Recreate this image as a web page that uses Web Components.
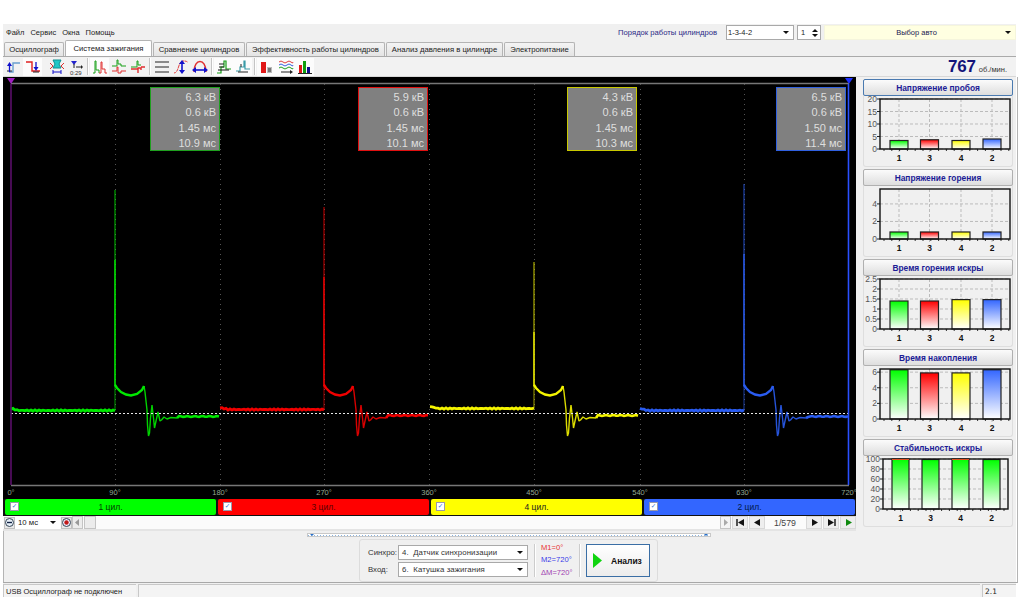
<!DOCTYPE html>
<html lang="ru">
<head>
<meta charset="utf-8">
<title>Система зажигания</title>
<style>
  html, body { margin: 0; padding: 0; background: #fff; }
  body { font-family: "Liberation Sans", sans-serif; font-size: 7.5px; color: #222; }
</style>
</head>
<body>
<app-window>
  <top-bar></top-bar>
  <cyl-tabs></cyl-tabs>
  <tool-bar></tool-bar>
  <main-area>
    <left-column>
      <scope-view></scope-view>
      <cyl-strip></cyl-strip>
      <nav-row></nav-row>
      <split-bar></split-bar>
      <analysis-panel></analysis-panel>
    </left-column>
    <side-panel>
      <bar-chart focus heading="Напряжение пробоя" max="20" ticks="0,5,10,15,20" values="3.4,3.7,3.4,4"></bar-chart>
      <bar-chart heading="Напряжение горения" max="5.7" ticks="0,2,4" values="0.8,0.8,0.8,0.8"></bar-chart>
      <bar-chart heading="Время горения искры" max="2.5" ticks="0,0.5,1,1.5,2,2.5" values="1.4,1.4,1.47,1.47"></bar-chart>
      <bar-chart heading="Время накопления" max="6.4" ticks="0,2,4,6" values="6.3,5.9,5.9,6.3"></bar-chart>
      <bar-chart mono heading="Стабильность искры" max="100" ticks="0,20,40,60,80,100" values="100,99,100,99"></bar-chart>
    </side-panel>
  </main-area>
  <status-bar></status-bar>
</app-window>

<script>
const CYL = [
  { name: '1 цил.', color: '#00ff00', text: '#043a04' },
  { name: '3 цил.', color: '#ff0000', text: '#5a0000' },
  { name: '4 цил.', color: '#ffff00', text: '#222' },
  { name: '2 цил.', color: '#3366ff', text: '#011a4a' }
]

class AppWindow extends HTMLElement {
  connectedCallback () {
    this.attachShadow({ mode: 'open' }).innerHTML = `
      <style>
        :host {
          display: flex;
          flex-direction: column;
          box-sizing: border-box;
          width: 1013px;
          height: 573px;
          margin: 24px 0 3px 3px;
          background: #f0f0f0;
        }
      </style>
      <slot></slot>`
  }
}

class WinSelect extends HTMLElement {
  connectedCallback () {
    this.attachShadow({ mode: 'open' }).innerHTML = `
      <style>
        :host {
          display: flex;
          align-items: center;
          box-sizing: border-box;
          height: 15px;
          padding: 0 4px 0 3px;
          background: #fff;
          border: 1px solid #a9a9a9;
          white-space: nowrap;
        }
        span { flex: 1; }
        i { width: 0; height: 0; border: 3px solid transparent; border-top: 3px solid #111; border-bottom: 0; }
      </style>
      <span><slot></slot></span><i></i>`
  }
}

class TopBar extends HTMLElement {
  connectedCallback () {
    this.attachShadow({ mode: 'open' }).innerHTML = `
      <style>
        :host { display: flex; align-items: center; height: 16px; flex: none; padding-top: 1px; box-sizing: border-box; }
        .menu { display: flex; gap: 6px; padding-left: 3px; flex: 1; }
        .order { color: #2a2a86; margin-right: 9px; font-size: 7.65px; }
        .spin {
          display: flex; align-items: center; justify-content: space-between; box-sizing: border-box;
          width: 24px; height: 15px; margin: 0 3px; padding: 0 2px 0 3px; background: #fff; border: 1px solid #a9a9a9;
        }
        .spin b { display: flex; flex-direction: column; gap: 2px; }
        .spin i { width: 0; height: 0; border: 3px solid transparent; }
        .spin i:first-child { border-bottom: 3px solid #111; border-top: 0; }
        .spin i:last-child { border-top: 3px solid #111; border-bottom: 0; }
      </style>
      <div class="menu"><span>Файл</span><span>Сервис</span><span>Окна</span><span>Помощь</span></div>
      <span class="order">Порядок работы цилиндров</span>
      <win-select style="width:68px;padding-left:1px">1-3-4-2</win-select>
      <div class="spin"><span>1</span><b><i></i><i></i></b></div>
      <win-select style="width:192px;background:#ffffe1;border-color:#f5f5dc;text-align:center;color:#1a1a50">Выбор авто</win-select>`
  }
}

class CylTabs extends HTMLElement {
  connectedCallback () {
    const tabs = [['Осциллограф', 60], ['Система зажигания', 87], ['Сравнение цилиндров', 92], ['Эффективность работы цилиндров', 139], ['Анализ давления в цилиндре', 117], ['Электропитание', 71]]
    this.attachShadow({ mode: 'open' }).innerHTML = `
      <style>
        :host { display: flex; align-items: flex-end; height: 16px; flex: none; padding-left: 1px; gap: 1px; box-sizing: border-box; font-size: 7.7px; }
        div {
          display: flex; align-items: center; justify-content: center; box-sizing: border-box;
          height: 14px; background: linear-gradient(#f4f4f4, #e4e4e4);
          border: 1px solid #b4b4b4; border-bottom: 0; border-radius: 2px 2px 0 0; white-space: nowrap;
        }
        .on { height: 16px; background: #fff; }
      </style>
      ${tabs.map(([t, w], i) => `<div class="${i === 1 ? 'on' : ''}" style="width:${w}px">${t}</div>`).join('')}`
  }
}

const ICONS = [
  '<path d="M3 13H7V4H14" stroke="#6aa0d0" fill="none" stroke-width="1.4"/><path d="M1 12H6" stroke="#222"/><path d="M3.5 13V6" stroke="#11c" stroke-width="1.3"/><path d="M1 7L3.5 3L6 7Z" fill="#11c"/>',
  '<path d="M1 3H7V12H15" stroke="#e02020" fill="none" stroke-width="1.4"/><path d="M8 13H14" stroke="#222"/><path d="M11 3V9" stroke="#11c" stroke-width="1.3"/><path d="M8.5 8H13.5L11 12Z" fill="#11c"/>',
  '<path d="M1 4L4 7L1 10M15 4L12 7L15 10" stroke="#e03030" fill="none"/><path d="M4 1H12L10 5L12 9H4L6 5Z" fill="#22c8c8" stroke="#109090"/><path d="M4 13H12M4 11V15M12 11V15" stroke="#11c"/>',
  '<path d="M3 2H9L6 6Z" fill="#22c"/><path d="M6 5V9M8 8H13" stroke="#222"/><path d="M13 6L15 8L13 10Z" fill="#222"/><text x="2" y="15.5" font-size="6" font-family="Liberation Sans" fill="#333">0:29</text>',
  '<path d="M1 14H3V2H4V11H7V14" stroke="#18a018" fill="none"/><path d="M7 14H9V3H10V10H13V14H15" stroke="#e03030" fill="none"/>',
  '<path d="M1 7H6V1H7V5H10V7H15" stroke="#18a018" fill="none"/><path d="M1 12H6V8H7V14H10V12H15" stroke="#e03030" fill="none"/>',
  '<path d="M1 8H7V2H8V6H11" stroke="#18a018" fill="none"/><path d="M1 10H8M11 8H15M8 14V9H11V11" stroke="#e03030" fill="none" stroke-width="1.4"/>',
  '<path d="M1 3H15M1 8H15M1 13H15" stroke="#222" stroke-width="1.2"/>',
  '<path d="M1 14C6 14 5 2 10 2S13 3 15 3" stroke="#e04040" fill="none" stroke-dasharray="3 .5"/><path d="M9 3V13" stroke="#11c" stroke-width="1.6"/><path d="M6 5L9 1L12 5ZM6 11L9 15L12 11Z" fill="#11c"/>',
  '<path d="M2 13C2 -1 14 -1 14 13" stroke="#e03030" fill="none" stroke-width="1.5"/><path d="M3 11H13" stroke="#11c" stroke-width="1.6"/><path d="M4 8L0 11L4 14ZM12 8L16 11L12 14Z" fill="#11c"/>',
  '<path d="M1 14H5V8H8V2H10V10H15" stroke="#18a018" fill="none" stroke-width="1.2"/><path d="M3 5H8M3 8H8" stroke="#222"/><path d="M2 11H13" stroke="#111"/>',
  '<path d="M1 12H5V8H9V2H10V10H15" stroke="#3a9ca8" fill="none" stroke-width="1.2"/><path d="M6 5V8M3 13H13" stroke="#222"/>',
  '<rect x="2" y="3" width="5" height="11" fill="#e01818"/><path d="M8 8H13V14H8Z" fill="#bbb"/><path d="M9 10H12M9 12H12" stroke="#333"/>',
  '<path d="M1 3Q3 1 5 3T9 3T13 3T15 3" stroke="#e04040" fill="none"/><path d="M1 6Q3 4 5 6T9 6T13 6T15 6" stroke="#3a60e0" fill="none"/><path d="M1 9Q3 7 5 9T9 9T13 9T15 9" stroke="#20a020" fill="none"/><path d="M3 13H12" stroke="#222"/><path d="M12 11L15 13L12 15Z" fill="#222"/>',
  '<rect x="2" y="6" width="3" height="8" fill="#e01818"/><rect x="6" y="2" width="3" height="12" fill="#10a010"/><rect x="10" y="8" width="3" height="6" fill="#10108a"/><path d="M1 14.5H15" stroke="#222"/>'
]

class ToolBar extends HTMLElement {
  connectedCallback () {
    const groups = [[0, 1], [2, 3], [4, 5, 6], [7, 8, 9], [10, 11], [12, 13, 14]]
    const lit = [1, 4, 10, 11, 12, 13, 14]
    this.attachShadow({ mode: 'open' }).innerHTML = `
      <style>
        :host {
          display: flex; align-items: center; height: 21px; flex: none; padding-left: 1px; box-sizing: border-box;
          border-top: 1px solid #aaa; border-bottom: 1px solid #d8d8d8; background: #f2f2f2;
        }
        .g { display: flex; }
        .b { display: flex; align-items: center; justify-content: center; width: 19px; height: 18px; }
        .on { background: #fcfcfc; }
        .sep { width: 2px; height: 17px; margin: 0 1px 0 2px; background: linear-gradient(90deg, #c4c4c4 50%, #fff 50%); }
        .gap { width: 5px; }
        .rpm { margin-left: auto; padding-right: 9px; display: flex; align-items: baseline; gap: 3px; color: #333; }
        b { font-size: 17px; color: #14147a; letter-spacing: -.2px; }
      </style>
      ${groups.map((g, i) => `
        ${i ? (i > 1 ? '<div class="sep"></div>' : '<div class="gap"></div>') : ''}
        <div class="g">${g.map(k => `<div class="b ${lit.includes(k) ? 'on' : ''}"><svg width="16" height="16" viewBox="0 0 16 16">${ICONS[k]}</svg></div>`).join('')}</div>`).join('')}
      <div class="rpm"><b>767</b><span>об./мин.</span></div>`
  }
}

class MainArea extends HTMLElement {
  connectedCallback () {
    this.attachShadow({ mode: 'open' }).innerHTML = `
      <style>:host { display: flex; flex: 1; min-height: 0; gap: 7px; border-bottom: 1px solid #a8a8a8; border-right: 1px solid #b4b4b4; margin-right: -2px; }</style>
      <slot></slot>`
  }
}

class LeftColumn extends HTMLElement {
  connectedCallback () {
    this.attachShadow({ mode: 'open' }).innerHTML = `
      <style>:host { display: flex; flex-direction: column; width: 853px; flex: none; box-shadow: inset 1px 0 #b4b4b4; }</style>
      <slot></slot>`
  }
}

class SidePanel extends HTMLElement {
  connectedCallback () {
    this.attachShadow({ mode: 'open' }).innerHTML = `
      <style>:host { display: flex; flex-direction: column; gap: 2px; width: 150px; flex: none; padding-top: 2px; }</style>
      <slot></slot>`
  }
}

class ValueBox extends HTMLElement {
  connectedCallback () {
    this.attachShadow({ mode: 'open' }).innerHTML = `
      <style>
        :host {
          position: absolute; top: 10px; box-sizing: border-box; width: 70px; height: 64px; padding: 2px 3px 0 0;
          background: #808080; border: 1px solid; color: #dedede;
          font-size: 11px; line-height: 15.4px; text-align: right;
        }
      </style>
      <slot></slot>`
  }
}

// x, y of one ignition cycle relative to the start of its 210 px segment
const CURVE = [[104, 385], [106, 388], [110, 392], [115, 394.5], [120, 395.5], [126, 394], [131, 390], [133, 386]]
const RING = [[133, 386], [134, 392], [136, 410], [136.5, 425], [137.5, 436], [138.5, 433], [139.5, 418], [141, 405], [142.5, 418], [143.5, 428], [145, 421], [147, 412], [149, 421], [150.5, 420], [153, 417], [156, 419], [160, 417.5], [166, 418]]

class ScopeView extends HTMLElement {
  trace (start, base, end, top, color, seed) {
    const pts = list => list.map(([x, y]) => `${start + x},${y}`).join(' ')
    let low = ''
    for (let x = 0; x <= 104; x += 2) {
      low += `${start + x},${(base + Math.sin((x + seed) * 1.7) * 0.6 + (x < 8 ? -2 * (1 - x / 8) : 0)).toFixed(1)} `
    }
    let tail = `${start + 166},418 `
    for (let x = 168; x <= 209; x += 2) {
      tail += `${start + x},${(end + Math.sin((x + seed) * 2.3) * 0.5).toFixed(1)} `
    }
    const sx = start + 104
    return `
      <polyline points="${low}" fill="none" stroke="${color}" stroke-width="2.8"/>
      <path d="M${sx} ${base}V386" stroke="${color}" stroke-width="1.2" opacity=".55"/>
      <path d="M${sx} 386V${top + 70}" stroke="${color}" stroke-width="1.6"/>
      <path d="M${sx} ${top + 70}V${top}" stroke="${color}" stroke-width="1" opacity=".85"/>
      <polyline points="${pts(CURVE)}" fill="none" stroke="${color}" stroke-width="2.4"/>
      <polyline points="${pts(RING)}" fill="none" stroke="${color}" stroke-width="1.4" stroke-linejoin="bevel" opacity=".9"/>
      <polyline points="${tail}" fill="none" stroke="${color}" stroke-width="2.6"/>`
  }

  connectedCallback () {
    const xs = [115, 220, 324, 429, 534, 640, 744]
    const deg = [[11, '0°'], [115, '90°'], [220, '180°'], [324, '270°'], [429, '360°'], [534, '450°'], [640, '540°'], [744, '630°'], [849, '720°']]
    const boxes = [
      [150, '#1fa01f', ['6.3 кВ', '0.6 кВ', '1.45 мс', '10.9 мс']],
      [358, '#e01010', ['5.9 кВ', '0.6 кВ', '1.45 мс', '10.1 мс']],
      [567, '#c8c800', ['4.3 кВ', '0.6 кВ', '1.45 мс', '10.3 мс']],
      [776, '#3060e0', ['6.5 кВ', '0.6 кВ', '1.50 мс', '11.4 мс']]
    ]
    this.attachShadow({ mode: 'open' }).innerHTML = `
      <style>
        :host { display: block; position: relative; height: 422px; flex: none; background: #000; overflow: hidden; }
        svg { display: block; }
        text { font-family: "Liberation Sans", sans-serif; font-size: 7.5px; fill: #93a893; text-anchor: middle; }
      </style>
      <svg width="853" height="422" viewBox="3 77 853 422">
        <path d="M11 83.5H849M11 485.5H849" stroke="#777" stroke-width="1.4"/>
        ${xs.map(x => `<path d="M${x}.5 84V490" stroke="#555" stroke-dasharray="1 4"/>`).join('')}
        ${this.trace(11, 410.5, 416.5, 190, '#00e800', 1)}
        ${this.trace(220, 409.5, 415.5, 207, '#f00000', 4)}
        ${this.trace(430, 408.5, 415.5, 262, '#f4f400', 9)}
        ${this.trace(640, 410.5, 416.5, 184, '#2a5cf0', 13)}
        <path d="M11 413.5H849" stroke="#e8e8e8" stroke-dasharray="2 2"/>
        <path d="M11 84V485" stroke="#5a0f6a" stroke-width="1.6"/>
        <path d="M848.5 84V485" stroke="#2a50ff" stroke-width="1.6"/>
        <path d="M7 78H15L11 84Z" fill="#a01fc0"/>
        <path d="M845 78H853L849 84Z" fill="#1f30ff"/>
        ${deg.map(([x, t]) => `<text x="${x}" y="495">${t}</text>`).join('')}
      </svg>
      ${boxes.map(([l, c, t]) => `<value-box style="left:${l - 3}px;border-color:${c}">${t.join('<br>')}</value-box>`).join('')}`
  }
}

class CylStrip extends HTMLElement {
  connectedCallback () {
    this.attachShadow({ mode: 'open' }).innerHTML = `
      <style>
        :host { display: flex; gap: 2px; height: 17px; flex: none; padding: 0 1px 1px 2px; box-sizing: border-box; background: #111; font-size: 8.5px; }
        div { flex: 1; display: flex; align-items: center; position: relative; border-radius: 2px; }
        i {
          position: absolute; left: 5px; top: 3px; width: 7px; height: 7px; background: #fff; border: 1px solid #99a;
          color: #2a6fd8; font: bold 6.5px/7px "DejaVu Sans", sans-serif; text-align: center;
        }
        span { flex: 1; text-align: center; }
      </style>
      ${CYL.map(c => `<div style="background:${c.color};color:${c.text}"><i>✓</i><span>${c.name}</span></div>`).join('')}`
  }
}

class NavRow extends HTMLElement {
  connectedCallback () {
    const btn = svg => `<div class="nb"><svg width="9" height="9" viewBox="0 0 9 9">${svg}</svg></div>`
    this.attachShadow({ mode: 'open' }).innerHTML = `
      <style>
        :host { display: flex; align-items: center; height: 13px; flex: none; padding-left: 1px; background: #fbfbfb; border-bottom: 2px solid #e4e4e4; }
        .c { display: flex; align-items: center; justify-content: center; box-sizing: border-box; width: 11px; height: 12px; background: #e8e8e8; border: 1px solid #c0c0c0; }
        win-select { width: 45px; height: 12px; border: 0; font-size: 7.8px; }
        .s { display: flex; align-items: center; justify-content: center; width: 11px; height: 13px; box-sizing: border-box; background: #ececec; border: 1px solid #c4c4c4; }
        .nb { display: flex; align-items: center; justify-content: center; box-sizing: border-box; width: 16px; height: 13px; background: #eee; border: 1px solid #d8d8d8; margin-left: 1px; }
        .page { width: 40px; text-align: center; font-size: 8.8px; color: #444; }
        .fill { flex: 1; }
      </style>
      <div class="c"><svg width="9" height="9" viewBox="0 0 9 9"><circle cx="4.5" cy="4.5" r="4" fill="#e8f0f8" stroke="#345"/><path d="M2 4.5H7" stroke="#124" stroke-width="1.4"/></svg></div>
      <win-select>10 мс</win-select>
      <div class="c" style="margin-left:1px"><svg width="9" height="9" viewBox="0 0 9 9"><circle cx="4.5" cy="4.5" r="4" fill="#eef" stroke="#345"/><circle cx="4.5" cy="4.5" r="2.2" fill="#c01818"/></svg></div>
      <div class="s"><svg width="5" height="7" viewBox="0 0 5 7"><path d="M4 0V7L0 3.5Z" fill="#999"/></svg></div>
      <div class="s" style="width:12px;margin-left:1px"></div>
      <div class="fill"></div>
      <div class="s" style="background:#f4f4f4"><svg width="5" height="7" viewBox="0 0 5 7"><path d="M1 0V7L5 3.5Z" fill="#aaa"/></svg></div>
      ${btn('<path d="M1 1V8" stroke="#111" stroke-width="1.4"/><path d="M8 1V8L2 4.5Z" fill="#111"/>')}
      ${btn('<path d="M7 1V8L1 4.5Z" fill="#111"/>')}
      <div class="page">1/579</div>
      ${btn('<path d="M2 1V8L8 4.5Z" fill="#111"/>')}
      ${btn('<path d="M1 1V8L7 4.5Z" fill="#111"/><path d="M8 1V8" stroke="#111" stroke-width="1.4"/>')}
      ${btn('<path d="M2 1V8L8 4.5Z" fill="#108a10"/>')}`
  }
}

class SplitBar extends HTMLElement {
  connectedCallback () {
    this.attachShadow({ mode: 'open' }).innerHTML = `
      <style>
        :host { display: flex; align-items: center; height: 6px; flex: none; margin-top: 1px; padding-left: 304px; }
        div {
          display: flex; align-items: center; justify-content: space-between; box-sizing: border-box;
          width: 404px; height: 4px; padding: 0 2px; border: 1px solid #c8c8c8; background: #fff;
          background-image: linear-gradient(90deg, #8ab4e0 50%, transparent 50%); background-size: 3px 1px;
          background-repeat: repeat-x; background-position: 0 center;
        }
        i { width: 0; height: 0; border: 2px solid transparent; border-top: 2px solid #2a70c8; border-bottom: 0; }
      </style>
      <div><i></i><i></i></div>`
  }
}

class AnalysisPanel extends HTMLElement {
  connectedCallback () {
    this.attachShadow({ mode: 'open' }).innerHTML = `
      <style>
        :host { display: flex; flex: none; padding: 1px 0 0 356px; font-size: 7.8px; }
        .group {
          display: flex; align-items: center; box-sizing: border-box; width: 299px; height: 43px;
          border: 1px solid #dcdcdc; border-radius: 3px; padding: 0 7px 0 8px;
        }
        .form { display: grid; grid-template-columns: 30px 130px; row-gap: 2px; align-items: center; color: #333; }
        win-select { font-size: 7.8px; letter-spacing: .1px; }
        .sep { width: 1px; height: 33px; margin: 0 6px; background: #ccc; box-shadow: 1px 0 #fff; }
        .m { display: flex; flex-direction: column; gap: 2px; width: 32px; font-size: 7.6px; line-height: 10.5px; white-space: nowrap; }
        .btn {
          display: flex; align-items: center; box-sizing: border-box; width: 64px; height: 33px; padding-left: 6px;
          background: linear-gradient(#fff, #ececec); border: 1px dotted #6a90bc; outline: 1px solid #3a6ea5; outline-offset: -1px;
          font-weight: bold; font-size: 8.5px; color: #111;
        }
        .btn svg { margin-right: 9px; }
      </style>
      <div class="group">
        <div class="form">
          <span>Синхро:</span><win-select>4.&nbsp; Датчик синхронизации</win-select>
          <span>Вход:</span><win-select>6.&nbsp; Катушка зажигания</win-select>
        </div>
        <div class="sep"></div>
        <div class="m">
          <span style="color:#e83030">M1=0°</span>
          <span style="color:#3a3ae8">M2=720°</span>
          <span style="color:#a040b0">ΔM=720°</span>
        </div>
        <div class="sep"></div>
        <div class="btn"><svg width="9" height="15" viewBox="0 0 9 15"><path d="M0 0V15L9 7.5Z" fill="#0fd40f"/></svg>Анализ</div>
      </div>`
  }
}

class BarChart extends HTMLElement {
  connectedCallback () {
    const max = +this.getAttribute('max')
    const ticks = this.getAttribute('ticks').split(',').map(Number)
    const values = this.getAttribute('values').split(',').map(Number)
    const mono = this.hasAttribute('mono')
    const L = mono ? 20 : 17
    const R = mono ? 145 : 147
    const B = 53
    const H = 50
    const y = v => B - v / max * H
    const bx = mono ? [29, 59, 89, 120] : [27, 57.5, 89, 120]
    const bw = mono ? 17 : 18
    const labels = ['1', '3', '4', '2']
    const border = this.hasAttribute('focus') ? '#4a7ab0' : '#b0b0b0'
    const id = this.getAttribute('heading').length
    let minor = ''
    for (let x = L + 4; x < R; x += 7.8) minor += `M${x} ${B}v2`
    this.attachShadow({ mode: 'open' }).innerHTML = `
      <style>
        :host {
          display: block; box-sizing: border-box; width: 150px; height: 88px; flex: none;
          background: #f0f0f0; border: 1px solid #dedede; border-top: 0; border-radius: 3px;
        }
        .head {
          display: flex; align-items: center; justify-content: center; box-sizing: border-box; height: 17px; margin: 0 -1px;
          background: linear-gradient(#fbfbfb, #dedede); border: 1px solid ${border}; border-radius: 2px;
          color: #1c1c96; font-weight: bold; font-size: 8.4px;
        }
        svg { display: block; margin-left: -1px; overflow: visible; }
        text { font-family: "Liberation Sans", sans-serif; font-size: 8.5px; fill: #333; }
        .n { font-weight: bold; fill: #111; text-anchor: middle; }
        .t { text-anchor: end; fill: #555; }
      </style>
      <div class="head">${this.getAttribute('heading')}</div>
      <svg width="150" height="70" viewBox="0 0 150 70">
        <defs>${CYL.map((c, i) => `<linearGradient id="g${id}${i}" x1="0" y1="0" x2="0" y2="1"><stop offset="0" stop-color="${mono ? '#00ff00' : c.color}"/><stop offset="1" stop-color="#fff"/></linearGradient>`).join('')}</defs>
        ${ticks.map(t => `<path d="M${L} ${y(t)}H${R}" stroke="#bbb" stroke-dasharray="3 2"/><path d="M${L - 3} ${y(t)}H${L}" stroke="#222"/><text class="t" x="${L - 3}" y="${y(t) + 3}">${t}</text>`).join('')}
        ${bx.map(x => `<path d="M${x + bw / 2} ${B - H}V${B + 3}" stroke="#bbb" stroke-dasharray="3 2"/>`).join('')}
        <path d="${minor}" stroke="#333"/>
        ${values.map((v, i) => `<rect x="${bx[i]}" y="${y(v)}" width="${bw}" height="${B - y(v)}" fill="url(#g${id}${i})" stroke="#222" stroke-width="1.2"/>`).join('')}
        <rect x="${L}" y="${B - H}" width="${R - L}" height="${H}" fill="none" stroke="#111" stroke-width="1.4"/>
        ${mono ? `<path d="M${bx[0]} 3.5h${bw}M${bx[2]} 3.5h${bw}" stroke="#e05020"/>` : ''}
        ${labels.map((t, i) => `<text class="n" x="${bx[i] + bw / 2}" y="65">${t}</text>`).join('')}
      </svg>`
  }
}

class StatusBar extends HTMLElement {
  connectedCallback () {
    this.attachShadow({ mode: 'open' }).innerHTML = `
      <style>
        :host { display: flex; gap: 2px; height: 13px; flex: none; margin-top: 1px; }
        div { display: flex; align-items: center; box-sizing: border-box; padding-left: 2px; background: #f4f4f4; border-left: 1px solid #c8c8c8; border-top: 1px solid #c8c8c8; white-space: nowrap; }
      </style>
      <div style="width:133px">USB Осциллограф не подключен</div>
      <div style="flex:1"></div>
      <div style="width:34px;font-family:'DejaVu Sans',sans-serif">2.1</div>`
  }
}

customElements.define('app-window', AppWindow)
customElements.define('win-select', WinSelect)
customElements.define('top-bar', TopBar)
customElements.define('cyl-tabs', CylTabs)
customElements.define('tool-bar', ToolBar)
customElements.define('main-area', MainArea)
customElements.define('left-column', LeftColumn)
customElements.define('side-panel', SidePanel)
customElements.define('value-box', ValueBox)
customElements.define('scope-view', ScopeView)
customElements.define('cyl-strip', CylStrip)
customElements.define('nav-row', NavRow)
customElements.define('split-bar', SplitBar)
customElements.define('analysis-panel', AnalysisPanel)
customElements.define('bar-chart', BarChart)
customElements.define('status-bar', StatusBar)
</script>
</body>
</html>
